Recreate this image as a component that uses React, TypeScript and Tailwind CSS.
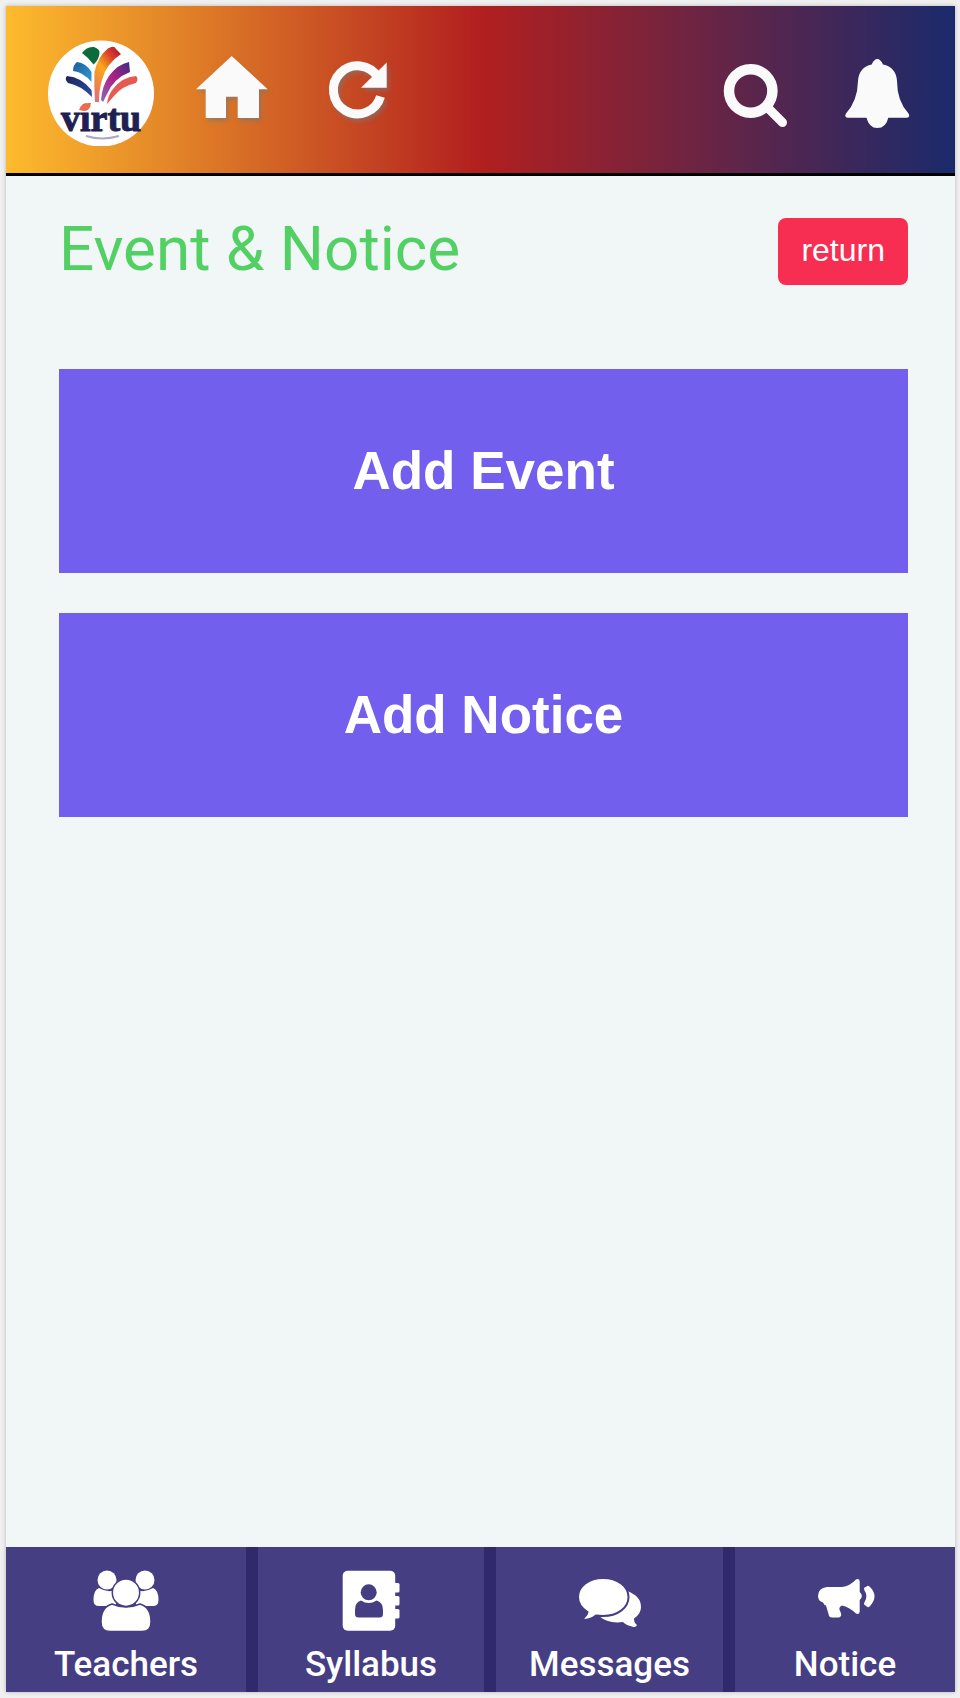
import type { ReactNode } from "react";

const SHADOW = "drop-shadow-[2px_3px_2px_rgba(120,120,120,0.6)]";

function Logo() {
  return (
    <svg viewBox="0 0 106 112" className="h-28 w-[106px]" role="img" aria-label="virtu">
      <defs>
        <linearGradient id="petal-orange" x1="0.8" y1="0" x2="0.2" y2="1">
          <stop offset="0" stopColor="#b81d2c" />
          <stop offset="0.2" stopColor="#d9402a" />
          <stop offset="0.5" stopColor="#fba81c" />
          <stop offset="0.75" stopColor="#f08a3c" />
          <stop offset="1" stopColor="#e0707a" />
        </linearGradient>
        <linearGradient id="petal-purple" x1="1" y1="0" x2="0" y2="1">
          <stop offset="0" stopColor="#3f2a86" />
          <stop offset="0.5" stopColor="#b02085" />
          <stop offset="1" stopColor="#8a6ab8" />
        </linearGradient>
        <linearGradient id="petal-blue" x1="0" y1="0" x2="1" y2="1">
          <stop offset="0" stopColor="#1d5c96" />
          <stop offset="1" stopColor="#2d9bd8" />
        </linearGradient>
        <linearGradient id="petal-navy" x1="0" y1="0" x2="1" y2="1">
          <stop offset="0" stopColor="#1b2457" />
          <stop offset="1" stopColor="#2a4fa8" />
        </linearGradient>
      </defs>
      <circle cx="53" cy="59.5" r="53" fill="#fff" />
      <path d="M34 19 Q39 12 46 13 Q52 15 51.5 19 Q51 26 45.5 30.5 Q41 24 34 19Z" fill="#0b6b3a" />
      <path d="M60 14.5 Q66 11 68 15 L73 20 Q58 30 54 46 Q51 56 51 68 L47 68 Q46 50 46.5 38 Q50 22 60 14.5Z" fill="url(#petal-orange)" />
      <path d="M29 28 Q38 29 43.5 38 L43.5 48 Q35 38 25 37 Q25 31 29 28Z" fill="url(#petal-blue)" />
      <path d="M19 42 Q33 43 43.5 56 L44 63 Q32 51 20 49 Q16 45 19 42Z" fill="url(#petal-navy)" />
      <path d="M81 28 L82 38 Q66 44 59 60 L55 68 L53 66 Q54 52 61 42 Q70 30 81 28Z" fill="url(#petal-purple)" />
      <path d="M88 42 Q91 45 88 49 Q74 52 66 62 L59 70 Q60 61 65 55 Q74 43 88 42Z" fill="#e75a52" />
      <text
        x="13"
        y="97"
        fontSize="38"
        fontWeight="700"
        fill="#1f2052"
        stroke="#1f2052"
        fontFamily="'Liberation Serif', serif"
      >
        virtu
      </text>
      <path d="M31 76 Q33 68 43 69 Q42 77 36 77Z" fill="#ee6a4b" />
      <path d="M38 102 Q54 107 71 102" fill="none" stroke="#a9abc4" strokeWidth="2" />
    </svg>
  );
}

function HomeIcon() {
  return (
    <svg viewBox="0 0 90 112" className={`h-28 w-[90px] ${SHADOW}`} fill="#fafafa" aria-hidden="true">
      <path d="M37.7 22 L2 55.3 H11.7 V84 H32 V62.7 H43.7 V84 H65 V55.3 H73.7Z" />
    </svg>
  );
}

function RefreshIcon() {
  return (
    <svg viewBox="0 0 72 112" className={`h-28 w-[72px] ${SHADOW}`} aria-hidden="true">
      <path d="M54 43.5 A24 24 0 1 0 56.5 62.5" fill="none" stroke="#fafafa" strokeWidth="9" />
      <path d="M62.7 28.5 V53.7 H37Z" fill="#fafafa" />
    </svg>
  );
}

function SearchIcon() {
  return (
    <svg viewBox="0 0 80 112" className="h-28 w-20" fill="none" stroke="#fafafa" aria-hidden="true">
      <circle cx="29.7" cy="57" r="21.7" strokeWidth="10.5" />
      <path d="M47 74 L61.5 88.5" strokeWidth="9" strokeLinecap="round" />
    </svg>
  );
}

function BellIcon() {
  return (
    <svg viewBox="0 0 72 112" className="h-28 w-[72px]" fill="#fafafa" aria-hidden="true">
      <path d="M36.3 25 Q39.5 25 42 30.5 Q55 33 56 47 Q56 67 67.5 79.5 Q69.5 83 66 83.7 H47.3 Q45 94 36.3 94 Q28 94 25.5 83.7 H6.5 Q3 83 5 79.5 Q16.5 67 17 47 Q18 33 30.7 30.5 Q33 25 36.3 25Z" />
    </svg>
  );
}

function TeachersIcon() {
  return (
    <svg viewBox="0 0 72 72" className="size-[72px]" fill="#fff" aria-hidden="true">
      <circle cx="17" cy="15" r="9.5" />
      <circle cx="55" cy="15" r="9.5" />
      <path d="M9 23 Q17 28 26 25 V41 H9 Q3.5 41 3.5 35 Q3.5 25 9 23Z" />
      <path d="M63 23 Q55 28 46 25 V41 H63 Q68.5 41 68.5 35 Q68.5 25 63 23Z" />
      <g stroke="#453e83" strokeWidth="1.5">
        <path d="M22 39 Q36 45 50 39 Q61 42 61 57 Q61 66.5 52 66.5 H20 Q11 66.5 11 57 Q11 42 22 39Z" />
        <circle cx="36" cy="27.7" r="13.7" />
      </g>
    </svg>
  );
}

function SyllabusIcon() {
  return (
    <svg viewBox="0 0 72 72" className="size-[72px]" fill="#fff" aria-hidden="true">
      <rect x="7.7" y="5.7" width="52.5" height="60" rx="5" />
      <rect x="55" y="18" width="9.5" height="9.5" rx="1.5" />
      <rect x="55" y="31" width="9.5" height="9.5" rx="1.5" />
      <rect x="55" y="44" width="9.5" height="9.5" rx="1.5" />
      <g fill="#453e83">
        <circle cx="33.7" cy="27.3" r="8" />
        <path d="M26 35.5 Q33.7 40.5 41.5 35.5 Q48 37 48 45 V49 Q48 52.5 44.5 52.5 H23.5 Q20 52.5 20 49 V45 Q20 37 26 35.5Z" />
      </g>
    </svg>
  );
}

function MessagesIcon() {
  return (
    <svg viewBox="0 0 72 72" className="size-[72px]" fill="#fff" aria-hidden="true">
      <path d="M53 26 Q67 31 67 42 Q67 49 60 53.5 Q60 58 63 60 Q62 63 58 61.5 Q52 60 49 57 Q34 59 25 51Z" />
      <g stroke="#453e83" strokeWidth="2">
        <path d="M29 13 C43.5 13 54.5 21.5 54.5 32 C54.5 43 43.5 51 29 51 Q25 51 22 50.5 Q17 54.5 10.5 55 Q8 54.5 10.5 52 Q13 50 13.5 47 Q4 41 4 32 C4 21.5 15 13 29 13Z" />
      </g>
    </svg>
  );
}

function NoticeIcon() {
  return (
    <svg viewBox="0 0 72 72" className="size-[72px]" fill="#fff" aria-hidden="true">
      <path d="M18 22 H33 Q41 21 47 14.5 Q50.5 13 50.7 17 V27 Q55 31 50.7 35 V46 Q50.5 50 47 48.5 Q40 42 33 40.5 Q29 42 31 46 Q34 51 30 52.5 H23 Q20 52.5 19.5 49 L17 40.5 Q15 40 14 37.5 Q9 36 9 31 Q9 23 18 22Z" />
      <path d="M57 24 Q62 31 57 38.5" fill="none" stroke="#fff" strokeWidth="4" strokeLinecap="round" />
      <path d="M59 23.5 Q67 31 59 39.5" fill="none" stroke="#fff" strokeWidth="5" strokeLinecap="round" />
    </svg>
  );
}

const NAV_ITEMS: { label: string; icon: ReactNode }[] = [
  { label: "Teachers", icon: <TeachersIcon /> },
  { label: "Syllabus", icon: <SyllabusIcon /> },
  { label: "Messages", icon: <MessagesIcon /> },
  { label: "Notice", icon: <NoticeIcon /> },
];

const ACTIONS = ["Add Event", "Add Notice"];

export default function App() {
  return (
    <div className="min-h-screen bg-[#f0f0f0] p-1.5 pr-[5px] flex">
      <div className="flex-1 min-w-0 flex flex-col bg-[#f1f7f7] shadow-[0_0_4px_rgba(0,0,0,0.25)]">
        {/* Top bar */}
        <header className="flex items-center justify-between px-[42px] pt-7 pb-[27px] border-b-[3px] border-black bg-linear-[90deg,#fdbb2d,#b21f1f,#1a2a6c]">
          <div className="flex items-center gap-10">
            <a href="#"><Logo /></a>
            <a href="#home" aria-label="Home"><HomeIcon /></a>
            <button type="button" aria-label="Refresh"><RefreshIcon /></button>
          </div>
          <div className="flex items-center gap-10">
            <button type="button" aria-label="Search"><SearchIcon /></button>
            <button type="button" aria-label="Notifications"><BellIcon /></button>
          </div>
        </header>

        {/* Content */}
        <main className="flex-1 pt-[42px] pl-[53px] pr-[47px]">
          <div className="flex items-start justify-between mb-[84px]">
            <h1 className="font-['Roboto',sans-serif] text-[62px] leading-[62px] text-[#53d063]">
              Event &amp; Notice
            </h1>
            <button
              type="button"
              className="h-[67px] px-[23px] pb-1 rounded-lg bg-[#f82d52] text-white text-[32px] leading-10 font-['Liberation_Sans',Arial,sans-serif]"
            >
              return
            </button>
          </div>

          <div className="flex flex-col gap-10">
            {ACTIONS.map((label) => (
              <button
                key={label}
                type="button"
                className="h-[204px] bg-[#735fed] text-white text-[53px] leading-[60px] font-bold font-['Liberation_Sans',Arial,sans-serif]"
              >
                {label}
              </button>
            ))}
          </div>
        </main>

        {/* Bottom nav */}
        <nav className="grid grid-cols-[240fr_238fr_239fr_232fr] bg-[#453e83]">
          {NAV_ITEMS.map((item) => (
            <a
              key={item.label}
              href={`#${item.label.toLowerCase()}`}
              className="flex flex-col items-center gap-2 pt-[18px] pb-[7px] border-l-[12px] border-[#30296b] first:border-l-0 text-white"
            >
              {item.icon}
              <span className="font-['Roboto',sans-serif] font-medium text-[35px] leading-10">{item.label}</span>
            </a>
          ))}
        </nav>
      </div>
    </div>
  );
}
